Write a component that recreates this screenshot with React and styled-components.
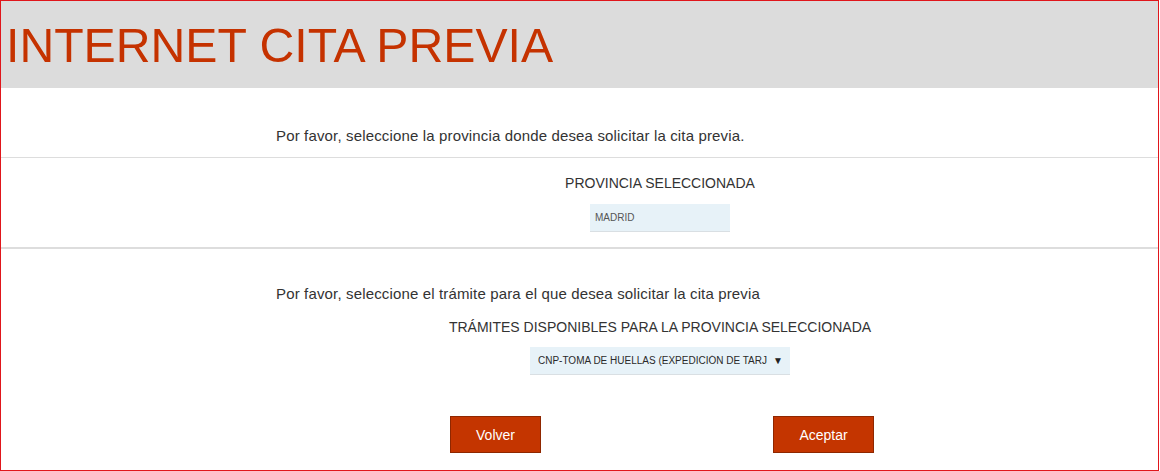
import React from "react";
import styled, { createGlobalStyle } from "styled-components";

const GlobalStyle = createGlobalStyle`
  html, body {
    margin: 0;
    padding: 0;
    background: #ffffff;
    font-family: "Liberation Sans", Arial, sans-serif;
  }
`;

// datos de la cita
const provincia = "MADRID";
const tramites = [
  "CNP-TOMA DE HUELLAS (EXPEDICIÓN DE TARJETA), RENOVACIÓN DE TARJETA, DUPLICADO Y LEY 11/2022",
  "POLICIA-CERTIFICADO DE REGISTRO DE CIUDADANO DE LA U.E.",
];

const App = () => {
  return (
    <>
      <GlobalStyle />
      <Frame>
        <Header>
          <Title>INTERNET CITA PREVIA</Title>
        </Header>

        <Content>
          <Intro top={40}>
            Por favor, seleccione la provincia donde desea solicitar la cita previa.
          </Intro>
        </Content>
        <Divider thick={1} top={13} />

        <Content>
          <FieldBlock>
            <Label top={17}>PROVINCIA SELECCIONADA</Label>
            <ReadOnlyField readOnly value={provincia} />
          </FieldBlock>
        </Content>
        <Divider thick={2} top={15} />

        <Content>
          <Intro top={37}>
            Por favor, seleccione el trámite para el que desea solicitar la cita previa
          </Intro>
          <FieldBlock>
            <Label top={17}>TRÁMITES DISPONIBLES PARA LA PROVINCIA SELECCIONADA</Label>
            <SelectWrap>
              <Select defaultValue={tramites[0]}>
                {tramites.map((t, i) => (
                  <option key={i} value={t}>{t}</option>
                ))}
              </Select>
              <Arrow>▼</Arrow>
            </SelectWrap>
          </FieldBlock>
          <Buttons>
            <Button wide={91}>Volver</Button>
            <Button wide={101}>Aceptar</Button>
          </Buttons>
        </Content>
      </Frame>
    </>
  );
};

const Frame = styled.div`
  width: 1159px;
  height: 471px;
  box-sizing: border-box;
  border: 1px solid #e0161b;
  overflow: hidden;
  background: #ffffff;
`;

const Header = styled.div`
  height: 87px;
  box-sizing: border-box;
  padding: 20px 0 0 5px;
  background-color: #dcdcdc;
`;

const Title = styled.h1`
  margin: 0;
  font-family: "Liberation Sans", Arial, sans-serif;
  font-weight: normal;
  font-size: 48.2px;
  line-height: 48px;
  color: #c53200;
`;

const Content = styled.div`
  margin-left: 275px;
  width: 768px;
`;

const Intro = styled.p`
  margin: ${(p) => p.top}px 0 0 0;
  font-size: 15px;
  letter-spacing: 0.15px;
  line-height: 16px;
  color: #333333;
`;

const Divider = styled.div`
  margin-top: ${(p) => p.top}px;
  height: ${(p) => p.thick}px;
  background-color: #dddddd;
`;

const FieldBlock = styled.div`
  display: flex;
  flex-direction: column;
  align-items: center;
`;

const Label = styled.div`
  margin-top: ${(p) => p.top}px;
  font-size: 14px;
  line-height: 16px;
  color: #333333;
`;

const ReadOnlyField = styled.input`
  margin-top: 13px;
  width: 140px;
  height: 28px;
  box-sizing: border-box;
  padding: 0 5px;
  border: none;
  border-bottom: 1px solid #d9dfe3;
  background-color: #e7f2f8;
  font-family: "Liberation Sans", Arial, sans-serif;
  font-size: 10px;
  color: #555555;
  outline: none;
`;

const SelectWrap = styled.div`
  position: relative;
  margin-top: 12px;
  width: 260px;
  height: 28px;
`;

const Select = styled.select`
  appearance: none;
  -webkit-appearance: none;
  width: 100%;
  height: 28px;
  box-sizing: border-box;
  padding: 0 23px 0 8px;
  border: none;
  border-bottom: 1px solid #d9dfe3;
  border-radius: 0;
  background-color: #e7f2f8;
  font-family: "Liberation Sans", Arial, sans-serif;
  font-size: 10px;
  color: #2a2a2a;
  outline: none;
`;

const Arrow = styled.span`
  position: absolute;
  right: 7px;
  top: 9px;
  font-size: 10px;
  line-height: 10px;
  color: #222222;
  pointer-events: none;
`;

const Buttons = styled.div`
  margin: 41px 0 0 174px;
  width: 424px;
  display: flex;
  justify-content: space-between;
`;

const Button = styled.button`
  width: ${(p) => p.wide}px;
  height: 37px;
  box-sizing: border-box;
  border: 1px solid #8f2700;
  background-color: #c43500;
  color: #ffffff;
  font-family: "Liberation Sans", Arial, sans-serif;
  font-size: 14px;
  cursor: pointer;
`;

export default App;
